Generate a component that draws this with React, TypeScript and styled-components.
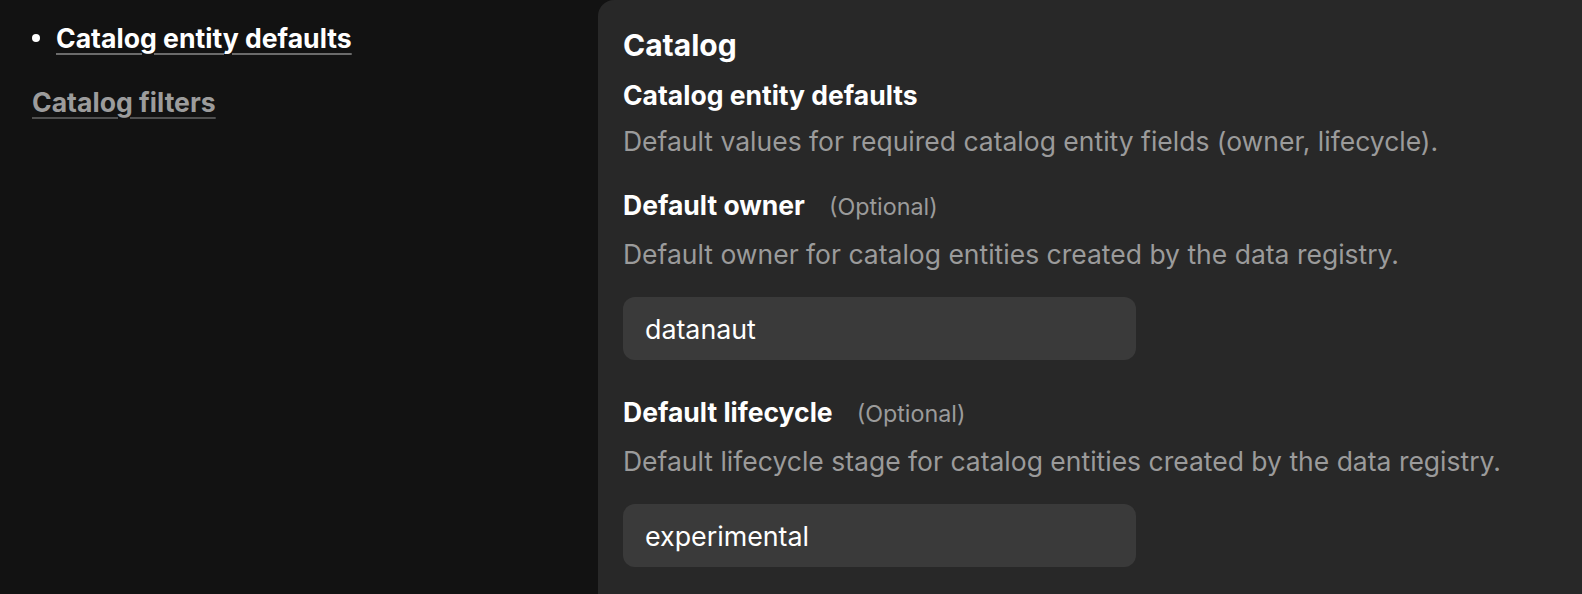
import React from "react";
import styled, { createGlobalStyle } from "styled-components";

const GlobalStyle = createGlobalStyle`
  html, body {
    margin: 0;
    padding: 0;
    background: #121212;
    font-family: Inter, "Noto Sans", sans-serif;
    color: #ffffff;
  }
`;

const Page = styled.div({
  display: "grid",
  gridTemplateColumns: "598px 1fr",
  height: "594px",
  overflow: "hidden",
});

const Sidebar = styled.nav({
  display: "flex",
  flexDirection: "column",
  alignItems: "flex-start",
  padding: "22px 0 0 32px",
  gap: "32px",
});

const NavItem = styled.a<{ $active?: boolean }>(props => ({
  display: "flex",
  alignItems: "center",
  gap: "16px",
  fontSize: "26.6px",
  fontWeight: 700,
  lineHeight: "32px",
  color: props.$active ? "#ffffff" : "#9c9c9c",
  textDecoration: "none",
  "& > span": {
    textDecoration: "underline",
    textDecorationColor: props.$active ? "#6b6b6b" : "#505050",
    textDecorationThickness: "2px",
    textUnderlineOffset: "5px",
  },
}));

const Bullet = styled.i({
  width: "8px",
  height: "8px",
  borderRadius: "50%",
  background: "#ffffff",
});

const Panel = styled.main({
  background: "#282828",
  borderTopLeftRadius: "16px",
  padding: "27px 24px 0 25px",
  display: "flex",
  flexDirection: "column",
});

const Title = styled.h1({
  margin: "0 0 16px",
  fontSize: "30px",
  lineHeight: "36px",
  fontWeight: 700,
});

const SectionTitle = styled.h2({
  margin: "0 0 14px",
  fontSize: "26.5px",
  lineHeight: "32px",
  fontWeight: 700,
});

const Description = styled.p({
  margin: 0,
  fontSize: "26.5px",
  lineHeight: "32px",
  color: "#9b9b9b",
});

const Fields = styled.div({
  display: "flex",
  flexDirection: "column",
  gap: "36px",
  paddingTop: "32px",
});

const Field = styled.div({
  display: "flex",
  flexDirection: "column",
});

const Label = styled.label({
  display: "flex",
  alignItems: "baseline",
  gap: "24px",
  fontSize: "26.5px",
  fontWeight: 700,
  lineHeight: "32px",
  marginBottom: "15px",
});

const Optional = styled.span({
  fontSize: "23.3px",
  fontWeight: 400,
  color: "#9b9b9b",
});

const Input = styled.input({
  marginTop: "27px",
  width: "513px",
  height: "63px",
  boxSizing: "border-box",
  border: "none",
  outline: "none",
  borderRadius: "12px",
  background: "#3a3a3a",
  color: "#ffffff",
  padding: "0 22px",
  fontFamily: "inherit",
  fontSize: "26.8px",
});

const fields = [
  {
    label: "Default owner",
    help: "Default owner for catalog entities created by the data registry.",
    value: "datanaut",
  },
  {
    label: "Default lifecycle",
    help: "Default lifecycle stage for catalog entities created by the data registry.",
    value: "experimental",
  },
];

export default function App() {
  return (
    <>
      <GlobalStyle />
      <Page>
        <Sidebar>
          <NavItem $active href="#">
            <Bullet />
            <span>Catalog entity defaults</span>
          </NavItem>
          <NavItem href="#">
            <span>Catalog filters</span>
          </NavItem>
        </Sidebar>
        <Panel>
          <Title>Catalog</Title>
          <SectionTitle>Catalog entity defaults</SectionTitle>
          <Description>
            Default values for required catalog entity fields (owner, lifecycle).
          </Description>
          <Fields>
            {fields.map(f => (
              <Field key={f.label}>
                <Label>
                  {f.label}
                  <Optional>(Optional)</Optional>
                </Label>
                <Description>{f.help}</Description>
                <Input defaultValue={f.value} readOnly />
              </Field>
            ))}
          </Fields>
        </Panel>
      </Page>
    </>
  );
}
